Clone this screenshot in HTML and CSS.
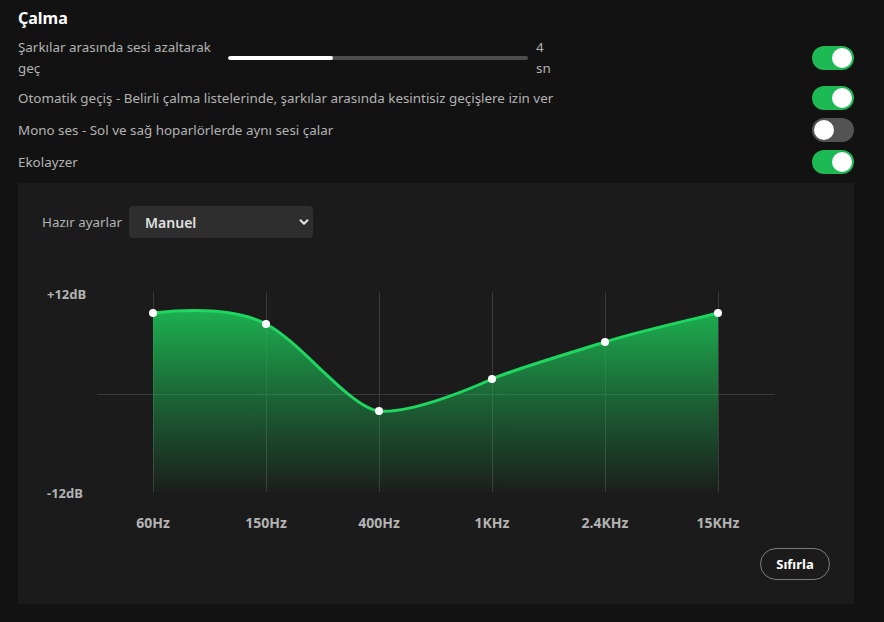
FILE: index.html
```html
<!DOCTYPE html>
<html lang="tr">
<head>
<meta charset="utf-8">
<title>Çalma</title>
<link rel="stylesheet" href="styles.css">
</head>
<body>
<main class="page">
  <h2 class="title">Çalma</h2>
  <div class="rows">
    <div class="row row-crossfade">
      <span class="label label-narrow">Şarkılar arasında sesi azaltarak geç</span>
      <div class="slider"><div class="slider-fill"></div></div>
      <span class="slider-value">4 sn</span>
      <span class="toggle on"><span class="knob"></span></span>
    </div>
    <div class="row">
      <span class="label">Otomatik geçiş - Belirli çalma listelerinde, şarkılar arasında kesintisiz geçişlere izin ver</span>
      <span class="toggle on"><span class="knob"></span></span>
    </div>
    <div class="row">
      <span class="label">Mono ses - Sol ve sağ hoparlörlerde aynı sesi çalar</span>
      <span class="toggle"><span class="knob"></span></span>
    </div>
    <div class="row">
      <span class="label">Ekolayzer</span>
      <span class="toggle on"><span class="knob"></span></span>
    </div>
  </div>

  <section class="eq">
    <div class="preset">
      <span class="preset-label">Hazır ayarlar</span>
      <div class="select">
        <span>Manuel</span>
        <svg class="chev" width="10" height="10" viewBox="0 0 10 10"><path d="M1.5 3.2 L5 6.7 L8.5 3.2" fill="none" stroke="#e6e6e6" stroke-width="2" stroke-linecap="round" stroke-linejoin="round"/></svg>
      </div>
    </div>

    <svg class="chart" width="788" height="260" viewBox="0 0 788 260">
      <defs>
        <linearGradient id="g" x1="0" y1="28" x2="0" y2="212" gradientUnits="userSpaceOnUse">
          <stop offset="0" stop-color="#1db954" stop-opacity="0.95"/>
          <stop offset="0.5" stop-color="#1db954" stop-opacity="0.45"/>
          <stop offset="1" stop-color="#1db954" stop-opacity="0.02"/>
        </linearGradient>
      </defs>
      <g stroke="#3b3b3b" stroke-width="1">
        <line x1="111.5" y1="12" x2="111.5" y2="212"/>
        <line x1="224.5" y1="12" x2="224.5" y2="212"/>
        <line x1="337.5" y1="12" x2="337.5" y2="212"/>
        <line x1="450.5" y1="12" x2="450.5" y2="212"/>
        <line x1="563.5" y1="12" x2="563.5" y2="212"/>
        <line x1="676.5" y1="12" x2="676.5" y2="212"/>
        <line x1="55" y1="114.5" x2="733" y2="114.5"/>
      </g>
      <path d="M111,33 C148,29 193,28 224,44 C259,62 308,128 337,131 C368,134 428,109 450,99 C473,89 528,73 563,62 C598,51 648,40 676,33 L676,212 L111,212 Z" fill="url(#g)"/>
      <path d="M111,33 C148,29 193,28 224,44 C259,62 308,128 337,131 C368,134 428,109 450,99 C473,89 528,73 563,62 C598,51 648,40 676,33" fill="none" stroke="#1ed760" stroke-width="3" stroke-linecap="round"/>
      <g fill="#ffffff">
        <circle cx="111" cy="33" r="4"/>
        <circle cx="224" cy="44" r="4"/>
        <circle cx="337" cy="131" r="4"/>
        <circle cx="450" cy="99" r="4"/>
        <circle cx="563" cy="62" r="4"/>
        <circle cx="676" cy="33" r="4"/>
      </g>
      <g class="db">
        <text x="5" y="19">+12dB</text>
        <text x="5" y="218">-12dB</text>
      </g>
      <g class="freq" text-anchor="middle">
        <text x="111" y="248">60Hz</text>
        <text x="224" y="248">150Hz</text>
        <text x="337" y="248">400Hz</text>
        <text x="450" y="248">1KHz</text>
        <text x="563" y="248">2.4KHz</text>
        <text x="676" y="248">15KHz</text>
      </g>
    </svg>

    <div class="actions">
      <button class="reset">Sıfırla</button>
    </div>
  </section>
</main>
</body>
</html>
```

FILE: styles.css
```css
html, body {
  margin: 0;
  padding: 0;
  background: #121212;
}
body {
  font-family: "Noto Sans", "Liberation Sans", sans-serif;
  color: #b3b3b3;
  width: 884px;
  height: 622px;
  overflow: hidden;
}
.page {
  padding: 8px 30px 0 18px;
}
.title {
  margin: 0 0 9px 0;
  font-size: 16px;
  line-height: 20px;
  font-weight: 700;
  color: #ffffff;
}
.rows {
  display: flex;
  flex-direction: column;
}
.row {
  display: flex;
  align-items: center;
  min-height: 32px;
}
.row-crossfade {
  min-height: 42px;
  margin-bottom: 3px;
}
.label {
  font-size: 13.4px;
  line-height: 21px;
  color: #b3b3b3;
  flex: 1 1 auto;
}
.label-narrow {
  flex: 0 0 202px;
  width: 202px;
}
.slider {
  flex: 0 0 300px;
  height: 4px;
  margin-left: 8px;
  border-radius: 2px;
  background: #4d4d4d;
  overflow: hidden;
}
.slider-fill {
  width: 105px;
  height: 4px;
  background: #ffffff;
  border-radius: 2px;
}
.slider-value {
  flex: 0 0 16px;
  width: 16px;
  margin-left: 8px;
  font-size: 13.4px;
  line-height: 21px;
  color: #b3b3b3;
}
.toggle {
  flex: 0 0 42px;
  width: 42px;
  height: 24px;
  margin-left: auto;
  border-radius: 12px;
  background: #535353;
  display: flex;
  align-items: center;
  padding: 0 2px;
  box-sizing: border-box;
}
.toggle.on {
  background: #1db954;
  justify-content: flex-end;
}
.knob {
  width: 20px;
  height: 20px;
  border-radius: 50%;
  background: #ffffff;
}
.eq {
  margin-top: 5px;
  background: #1b1b1b;
  padding: 23px 24px 24px 24px;
  display: flex;
  flex-direction: column;
}
.preset {
  display: flex;
  align-items: center;
  height: 32px;
}
.preset-label {
  font-size: 13.4px;
  color: #b3b3b3;
  margin-right: 7px;
}
.select {
  width: 184px;
  height: 32px;
  box-sizing: border-box;
  background: #2e2e2e;
  border-radius: 4px;
  display: flex;
  align-items: center;
  justify-content: space-between;
  padding: 0 4px 0 16px;
  font-size: 14px;
  font-weight: 600;
  color: #e0e0e0;
}
.chart {
  display: block;
  margin-top: 42px;
}
.chart text {
  font-family: "Noto Sans", "Liberation Sans", sans-serif;
  font-weight: 700;
  font-size: 13px;
  fill: #b3b3b3;
}
.chart .freq text {
  font-size: 14px;
}
.actions {
  display: flex;
  justify-content: flex-end;
  margin-top: 8px;
}
.reset {
  height: 32px;
  width: 70px;
  border: 1px solid #7c7c7c;
  border-radius: 16px;
  background: transparent;
  color: #ffffff;
  font-family: "Noto Sans", "Liberation Sans", sans-serif;
  font-weight: 700;
  font-size: 13px;
  padding: 0;
}
```
